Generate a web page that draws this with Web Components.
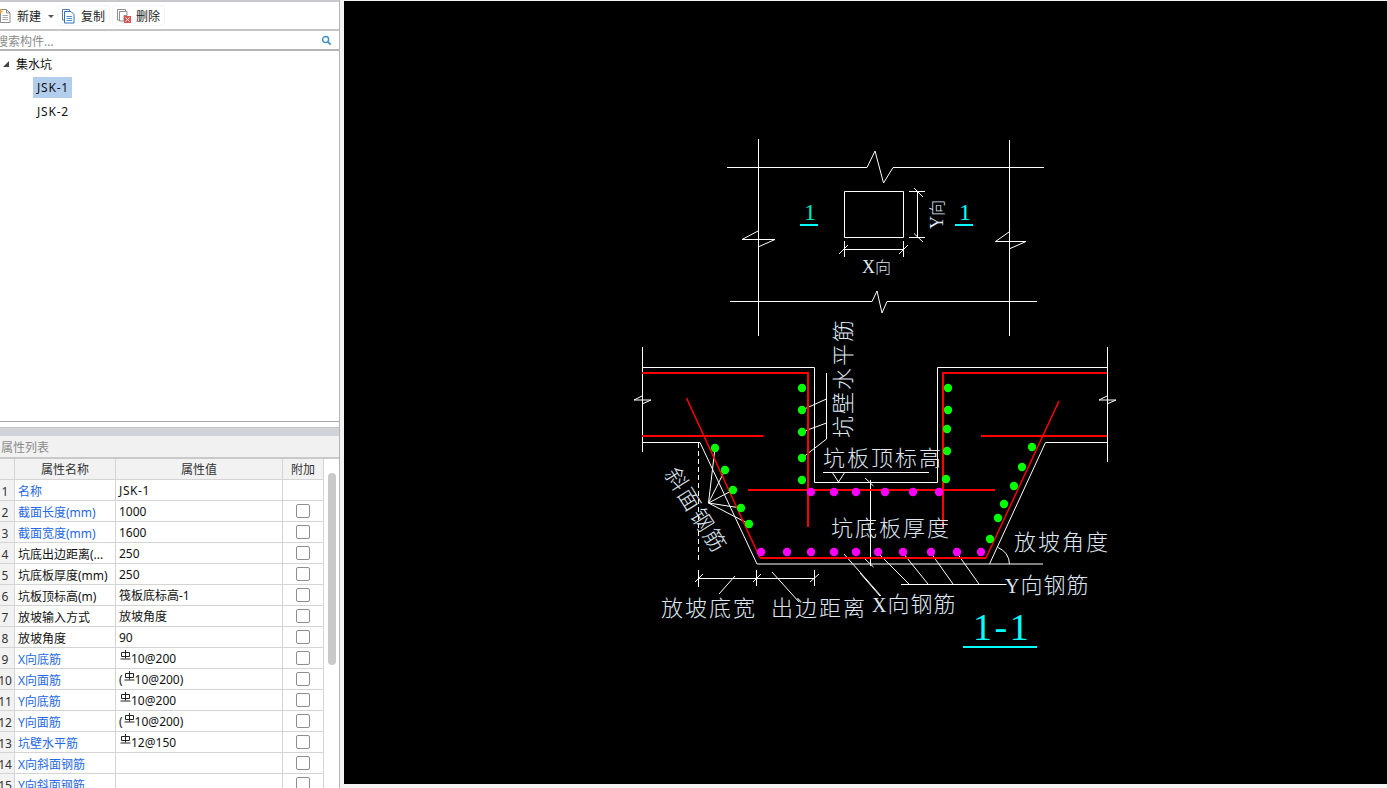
<!DOCTYPE html>
<html lang="zh">
<head>
<meta charset="utf-8">
<title>集水坑</title>
<style>
  html, body { margin: 0; height: 100%; overflow: hidden; }
  body { background: #f3f3f3; font: 12px "Noto Sans", "Noto Sans CJK SC", sans-serif; color: #111; }
</style>
</head>
<body>
<app-shell>
  <side-panel slot="side">
    <tool-bar>
      <tool-button icon="new" caret>新建</tool-button>
      <tool-button icon="copy">复制</tool-button>
      <tool-button icon="delete">删除</tool-button>
    </tool-bar>
    <search-box placeholder="搜索构件..."></search-box>
    <component-tree></component-tree>
    <prop-table></prop-table>
  </side-panel>
  <cad-canvas slot="main"></cad-canvas>
</app-shell>

<script>
class AppShell extends HTMLElement {
  constructor() {
    super();
    this.attachShadow({ mode: "open" });
    this.shadowRoot.innerHTML = `
      <style>
        :host { display: flex; height: 788px; width: 1387px; overflow: hidden; }
        .side { flex: 0 0 340px; width: 340px; display: flex; }
        .main { flex: 1; margin: 1px 0 4px 4px; display: flex; min-width: 0; }
      </style>
      <div class="side"><slot name="side"></slot></div>
      <div class="main"><slot name="main"></slot></div>
    `;
  }
}

class SidePanel extends HTMLElement {
  constructor() {
    super();
    this.attachShadow({ mode: "open" });
    this.shadowRoot.innerHTML = `
      <style>
        :host {
          display: flex; flex-direction: column; width: 340px; height: 788px;
          background: #fff; overflow: hidden; box-sizing: border-box;
          border-top: 2px solid #c8c9cc; border-right: 1px solid #b4b4b4;
        }
      </style>
      <slot></slot>
    `;
  }
}

const TOOL_ICONS = {
  new: `<svg width="16" height="16" viewBox="0 0 16 16"><path d="M3.5 1.5h6l3.5 3.5v9.5h-9.5z" fill="#fff" stroke="#8d8d8d"/><path d="M9.5 1.5v3.5h3.5" fill="none" stroke="#8d8d8d"/><path d="M5.5 7.5h5.5M5.5 9.5h5.5M5.5 11.5h5.5" stroke="#a9a9a9"/><path d="M1 3.5h4.500M3.500 1v4.500" stroke="#eda13a" stroke-width="1.500"/></svg>`,
  copy: `<svg width="16" height="16" viewBox="0 0 16 16"><path d="M1.500 1.500h7v2" fill="none" stroke="#5f7f9f"/><path d="M1.500 1.500v10.500h2" fill="none" stroke="#5f7f9f"/><path d="M3.500 3.500h6.500l3 3v8.500h-9.500z" fill="#fff" stroke="#2d72b8"/><path d="M5.500 8.500h5.500M5.500 10.500h5.500M5.500 12.500h5.500" stroke="#4d90d0"/></svg>`,
  delete: `<svg width="16" height="16" viewBox="0 0 16 16"><path d="M1.500 1.500h8v2" fill="none" stroke="#8d8d8d"/><path d="M1.500 1.500v10.500h2" fill="none" stroke="#8d8d8d"/><path d="M3.500 3.500h7.500v4h-3v5.500h-4.500z" fill="#fff" stroke="#8d8d8d"/><rect x="8" y="8" width="7" height="7" fill="#d9534f"/><path d="M9.500 9.500l4 4M13.500 9.500l-4 4" stroke="#fff"/></svg>`,
};

class ToolBar extends HTMLElement {
  constructor() {
    super();
    this.attachShadow({ mode: "open" });
    this.shadowRoot.innerHTML = `
      <style>
        :host {
          display: flex; align-items: center; gap: 2px; height: 27px; flex: none;
          margin-left: -4px; background: #fff;
        }
      </style>
      <slot></slot>
    `;
  }
}

class ToolButton extends HTMLElement {
  constructor() {
    super();
    this.attachShadow({ mode: "open" });
  }

  connectedCallback() {
    const icon = TOOL_ICONS[this.getAttribute("icon")];
    const caret = this.hasAttribute("caret");
    this.shadowRoot.innerHTML = `
      <style>
        :host {
          display: flex; align-items: center; gap: 4px; height: 19px;
          padding: 0 4px 0 3px; color: #222; font-size: 12px;
          border: 1px solid #f6f6f6; border-radius: 3px;
        }
        :host([caret]) { padding: 0; border-color: transparent; }
        svg { display: block; }
        .caret {
          width: 0; height: 0; margin-top: 1px; margin-left: 3px;
          border: 3px solid transparent; border-top: 3px solid #555; border-bottom: 0;
        }
      </style>
      ${icon}<slot></slot>${caret ? `<span class="caret"></span>` : ""}
    `;
  }
}

class SearchBox extends HTMLElement {
  constructor() {
    super();
    this.attachShadow({ mode: "open" });
  }

  connectedCallback() {
    this.shadowRoot.innerHTML = `
      <style>
        :host {
          display: flex; align-items: center; justify-content: space-between; flex: none;
          height: 18px; padding: 0 7px 0 0; margin-left: -4px; background: #fff;
          border-top: 2px solid #c4c5c8; border-bottom: 2px solid #b4b5b8;
          color: #8a8a8a; font-size: 12px;
        }
        span { position: relative; top: 1px; }
        svg { display: block; margin-top: 1px; }
      </style>
      <span>${this.getAttribute("placeholder")}</span>
      <svg width="11" height="11" viewBox="0 0 12 12"><circle cx="5" cy="5" r="3.300" fill="none" stroke="#3d8fc4" stroke-width="1.600"/><path d="M7.500 7.500l3 3" stroke="#3d8fc4" stroke-width="2"/></svg>
    `;
  }
}

class ComponentTree extends HTMLElement {
  constructor() {
    super();
    this.attachShadow({ mode: "open" });
    this.shadowRoot.innerHTML = `
      <style>
        :host {
          display: flex; flex-direction: column; flex: none; box-sizing: border-box;
          height: 371px; padding-top: 1px; background: #fff;
          border-bottom: 1px solid #a8a8a8; color: #111; font-size: 12px;
        }
        .group { display: flex; align-items: center; height: 23px; padding-left: 3px; gap: 7px; }
        .arrow { width: 0; height: 0; border-left: 6px solid transparent; border-bottom: 6px solid #444; }
        .leaf { display: flex; align-items: center; height: 24px; padding-left: 33px; }
        .leaf span { display: block; padding: 0 3px 0 4px; line-height: 21px; letter-spacing: 0.8px; }
        .sel { background: #b3cdec; }
      </style>
      <div class="group"><i class="arrow"></i><span>集水坑</span></div>
      <div class="leaf"><span class="sel">JSK-1</span></div>
      <div class="leaf"><span>JSK-2</span></div>
    `;
  }
}

const REBAR = `<svg class="rb" width="11" height="12" viewBox="0 0 11 12"><path d="M1.500 2.500h8v4h-8zM5.500 0v8.500M0.500 9h10" fill="none" stroke="#222"/></svg>`;

const PROPS = [
  ["名称", `<span style="letter-spacing:.6px">JSK-1</span>`, true, false],
  ["截面长度(mm)", "1000", true, true],
  ["截面宽度(mm)", "1600", true, true],
  ["坑底出边距离(...", "250", false, true],
  ["坑底板厚度(mm)", "250", false, true],
  ["坑板顶标高(m)", "筏板底标高-1", false, true],
  ["放坡输入方式", "放坡角度", false, true],
  ["放坡角度", "90", false, true],
  ["X向底筋", REBAR + "10@200", true, true],
  ["X向面筋", "(" + REBAR + "10@200)", true, true],
  ["Y向底筋", REBAR + "10@200", true, true],
  ["Y向面筋", "(" + REBAR + "10@200)", true, true],
  ["坑壁水平筋", REBAR + "12@150", true, true],
  ["X向斜面钢筋", "", true, true],
  ["Y向斜面钢筋", "", true, true],
];

class PropTable extends HTMLElement {
  constructor() {
    super();
    this.attachShadow({ mode: "open" });
  }

  connectedCallback() {
    const rows = PROPS.map(([name, value, blue, check], i) => `
      <div class="row">
        <div class="idx">${i + 1}</div>
        <div class="name ${blue ? "blue" : ""}">${name}</div>
        <div class="val">${value}</div>
        <div class="add">${check ? `<i class="box"></i>` : ""}</div>
      </div>`).join("");

    this.shadowRoot.innerHTML = `
      <style>
        :host { display: flex; flex-direction: column; flex: 1; min-height: 0; background: #fff; font-size: 12px; color: #111; }
        .split { height: 8px; margin-top: 5px; background: #d2d3d8; border-top: 1px solid #c6c7cb; flex: none; }
        .title {
          height: 21px; line-height: 23px; background: #f1f1f1; color: #8c8c8c; flex: none;
          border-bottom: 2px solid #c9c9c9; padding-left: 1px; font-size: 12px;
        }
        .body { display: flex; flex: 1; min-height: 0; }
        .grid { width: 328px; margin-left: -4px; flex: none; overflow: hidden; }
        .row, .head { display: grid; grid-template-columns: 19px 101px 167px 41px; height: 21px; box-sizing: border-box; border-bottom: 1px solid #d4d4d4; }
        .row > div, .head > div { border-right: 1px solid #d4d4d4; line-height: 23px; white-space: nowrap; overflow: hidden; }
        .head > div { line-height: 21px; }
        .head { background: #f2f2f2; color: #333; text-align: center; }
        .idx { background: #f2f2f2; text-align: center; color: #333; }
        .name { padding-left: 3px; }
        .blue { color: #2468e4; }
        .val { padding-left: 3px; display: flex; align-items: center; }
        .rb { margin: -4px 0 0 1px; flex: none; }
        .add { display: flex; align-items: center; justify-content: center; }
        .box { width: 12px; height: 12px; border: 1px solid #8e8e8e; border-radius: 2px; display: block; background: #fff; }
        .track { flex: 1; }
        .thumb { width: 8px; height: 192px; margin: 14px 0 0 4px; border-radius: 4px; background: #c9c9c9; }
      </style>
      <div class="split"></div>
      <div class="title">属性列表</div>
      <div class="body">
        <div class="grid">
          <div class="head"><div></div><div>属性名称</div><div>属性值</div><div>附加</div></div>
          ${rows}
        </div>
        <div class="track"><div class="thumb"></div></div>
      </div>
    `;
  }
}

class CadCanvas extends HTMLElement {
  constructor() {
    super();
    this.attachShadow({ mode: "open" });
  }

  connectedCallback() {
    const dot = (pts, cls) => pts.map(([x, y]) => `<circle class="${cls}" cx="${x}" cy="${y}" r="4.200"/>`).join("");
    const lines = (arr) => arr.map((p) => `<polyline points="${p}"/>`).join("");
    const green = [[802,388],[802,410],[802,432],[802,458],[802,480],[948,388],[948,410],[947,429],[947,451],[946,479],
      [1032,447],[1022,467],[1014,486],[1004,504],[998,518],[990,539],[715,448],[725,470],[733,490],[741,508],[749,524]];
    const pink = [[811,492],[834,492],[856,492],[885,492],[913,492],[939,492],
      [761,552],[787,552],[811,552],[834,552],[856,552],[878,552],[903,552],[931,552],[957,552],[981,552]];
    const white = [
      // plan view
      "727,167.500 867,167.500 875,151 883.500,183 893,167.500 1044,167.500",
      "758.500,139 758.500,336", "1009.500,140 1009.500,336",
      "758,231 742,239.500 775,239.500 758,247", "1009,232 995.500,241.500 1026,241.500 1009,249",
      "730,301.500 872,301.500 877,291 882,313 887,301.500 1037,301.500",
      "844.500,191.500 903.500,191.500 903.500,237.500 844.500,237.500 844.500,191.500",
      "917.500,191 917.500,238", "909,191.500 925,191.500", "909,237.500 925,237.500", "914,188 923,197", "914,233.500 923,242",
      "844,249.500 904,249.500", "844.500,241 844.500,257", "903.500,241 903.500,257", "839,254 848,245", "899,254 908,245",
      // section outline
      "642.500,347 642.500,452", "634,400 642,396", "634,400 651,400 642,404",
      "1107.500,347 1107.500,462", "1099,400 1107,396", "1099,400 1116,400 1107,404",
      "642,367.500 814.500,367.500 814.500,482.500 937.500,482.500 937.500,367.500 1107,367.500",
      "642,442.500 700,442.500 757,564 1043,564", "989.500,564 1045.500,442.500 1107,442.500",
      "823,472.500 929,472.500", "832,472 838.500,482 845,472",
      "870.500,480 870.500,566", "865,478 873.500,486", "865,559 873.500,567",
      // wall leaders
      "826.500,373 826.500,439 802,458", "826.500,399 802,410", "826.500,423 802,432",
      // fan of slope bars
      "708.500,503 715,448", "708.500,503 725,470", "708.500,503 733,490", "708.500,503 741,508", "708.500,503 749,524",
      // dims
      "698.500,578.500 814.500,578.500", "698.500,570 698.500,587", "756.500,570 756.500,586", "814.500,570 814.500,586",
      "695,582 703,574", "753,582 761,574", "810,582 819,574",
      "719,594 735,576", "772,572 799,602", "844,554 881,596", "860,573 880,596",
      "901,584.500 1006.500,584.500", "878,553 909,584", "903,553 928,584", "931,553 953,584", "957,553 979,584",
    ];
    this.shadowRoot.innerHTML = `
      <style>
        :host { display: block; flex: 1; background: #000; overflow: hidden; }
        svg { display: block; }
        .w polyline { fill: none; stroke: #fff; stroke-width: 1; }
        .r { fill: none; stroke: #f00; stroke-width: 2; }
        .r2 { fill: none; stroke: #f00; stroke-width: 1.500; }
        .g { fill: #0f0; }
        .p { fill: #f0f; }
        text { font-family: "Liberation Serif", "Noto Sans CJK SC", serif; fill: #dfe8f2; font-size: 22px; font-weight: 300; letter-spacing: 2px; }
        .c { fill: #00ffff; }
        .t { fill: #00e8c0; }
        .one { font-size: 24px; letter-spacing: 0; }
        .sm { font-size: 16px; letter-spacing: 0; }
        .sm tspan { font-size: 18px; }
        .en { letter-spacing: 1px; }
        .en tspan { font-size: 20px; }
        .big { font-size: 38px; letter-spacing: 2.500px; fill: #00ffff; }
      </style>
      <svg width="1043" height="783" viewBox="344 1 1043 783">
        <g class="w">${lines(white)}
          <path d="M698.500 443V563" fill="none" stroke="#fff" stroke-dasharray="5 3"/>
          <path d="M998 547.500A18 18 0 0 1 1009.500 564" fill="none" stroke="#fff"/>
        </g>
        <path class="r" d="M642 373H808V527"/>
        <path class="r" d="M642 436H763.500"/>
        <path class="r" d="M1107 373H943V527"/>
        <path class="r" d="M981 436H1107"/>
        <path class="r" d="M748 490H995"/>
        <path class="r" d="M760 558H986"/>
        <path class="r2" d="M686.500 398L760 558"/>
        <path class="r2" d="M986 558L1059 401"/>
        ${dot(green, "g")}${dot(pink, "p")}
        <text class="one t" x="804" y="220">1</text>
        <rect x="800" y="224" width="18" height="2" fill="#00ffff"/>
        <text class="one c" x="959" y="220">1</text>
        <rect x="955" y="224" width="18" height="2" fill="#00ffff"/>
        <text class="sm" x="862" y="273"><tspan>X</tspan>向</text>
        <text class="sm" transform="translate(943 229) rotate(-90)"><tspan>Y</tspan>向</text>
        <text transform="translate(851 438) rotate(-90)">坑壁水平筋</text>
        <text x="823" y="466">坑板顶标高</text>
        <text x="831" y="536">坑底板厚度</text>
        <text x="1014" y="550">放坡角度</text>
        <text class="en" x="1005" y="593"><tspan>Y</tspan>向钢筋</text>
        <text class="en" x="872" y="612"><tspan>X</tspan>向钢筋</text>
        <text x="661" y="616">放坡底宽</text>
        <text x="771" y="616">出边距离</text>
        <text transform="translate(664 474) rotate(58)">斜面钢筋</text>
        <text class="big" x="973" y="640">1-1</text>
        <rect x="963" y="646" width="74" height="2" fill="#00ffff"/>
      </svg>
    `;
  }
}

customElements.define("app-shell", AppShell);
customElements.define("side-panel", SidePanel);
customElements.define("tool-bar", ToolBar);
customElements.define("tool-button", ToolButton);
customElements.define("search-box", SearchBox);
customElements.define("component-tree", ComponentTree);
customElements.define("prop-table", PropTable);
customElements.define("cad-canvas", CadCanvas);
</script>
</body>
</html>
